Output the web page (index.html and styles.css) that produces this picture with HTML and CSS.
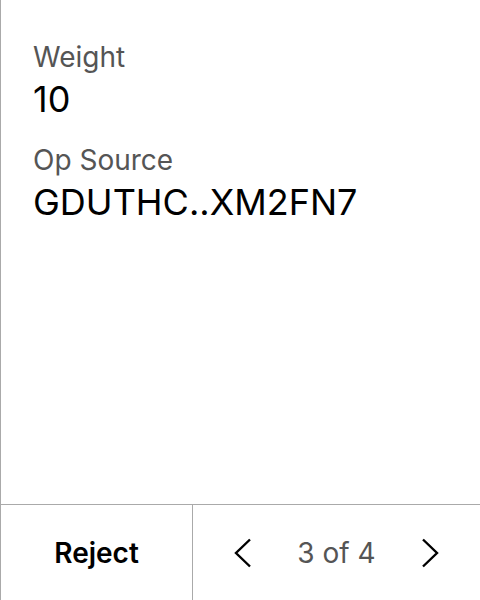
FILE: index.html
```html
<!DOCTYPE html>
<html>
<head>
<meta charset="utf-8">
<link rel="stylesheet" href="styles.css">
</head>
<body>
<div class="panel">
  <div class="content">
    <div class="field">
      <div class="label">Weight</div>
      <div class="value">10</div>
    </div>
    <div class="field">
      <div class="label">Op Source</div>
      <div class="value">GDUTHC..XM2FN7</div>
    </div>
  </div>
  <div class="footer">
    <button class="reject">Reject</button>
    <div class="pager">
      <button class="nav" aria-label="Previous">
        <svg width="18" height="30" viewBox="0 0 18 30"><path d="M16 1.5 L2 15 L16 28.5" fill="none" stroke="#000" stroke-width="2.4"/></svg>
      </button>
      <span class="count">3 of 4</span>
      <button class="nav" aria-label="Next">
        <svg width="18" height="30" viewBox="0 0 18 30"><path d="M2 1.5 L16 15 L2 28.5" fill="none" stroke="#000" stroke-width="2.4"/></svg>
      </button>
    </div>
  </div>
</div>
</body>
</html>
```
FILE: styles.css
```css
html, body {
  margin: 0;
  padding: 0;
  background: #fff;
}
body {
  font-family: Inter, "Noto Sans", sans-serif;
  width: 480px;
  height: 600px;
}
.panel {
  box-sizing: border-box;
  height: 600px;
  border-left: 1px solid #aaa;
  display: flex;
  flex-direction: column;
}
.content {
  flex: 1;
  padding: 40px 0 0 32px;
  display: flex;
  flex-direction: column;
  gap: 22px;
}
.field {
  display: flex;
  flex-direction: column;
  gap: 3px;
}
.label {
  font-size: 28px;
  line-height: 34px;
  color: #555;
}
.value {
  font-size: 36px;
  line-height: 44px;
  color: #000;
}
.footer {
  box-sizing: border-box;
  height: 96px;
  border-top: 1px solid #aaa;
  display: flex;
}
.reject {
  width: 192px;
  border: none;
  border-right: 1px solid #aaa;
  background: #fff;
  font-family: inherit;
  font-size: 28px;
  font-weight: 600;
  color: #000;
  padding: 0;
}
.pager {
  flex: 1;
  display: flex;
  align-items: center;
  justify-content: center;
  gap: 45px;
}
.nav {
  border: none;
  background: none;
  padding: 0;
  display: flex;
}
.count {
  font-size: 28px;
  color: #555;
}
```
